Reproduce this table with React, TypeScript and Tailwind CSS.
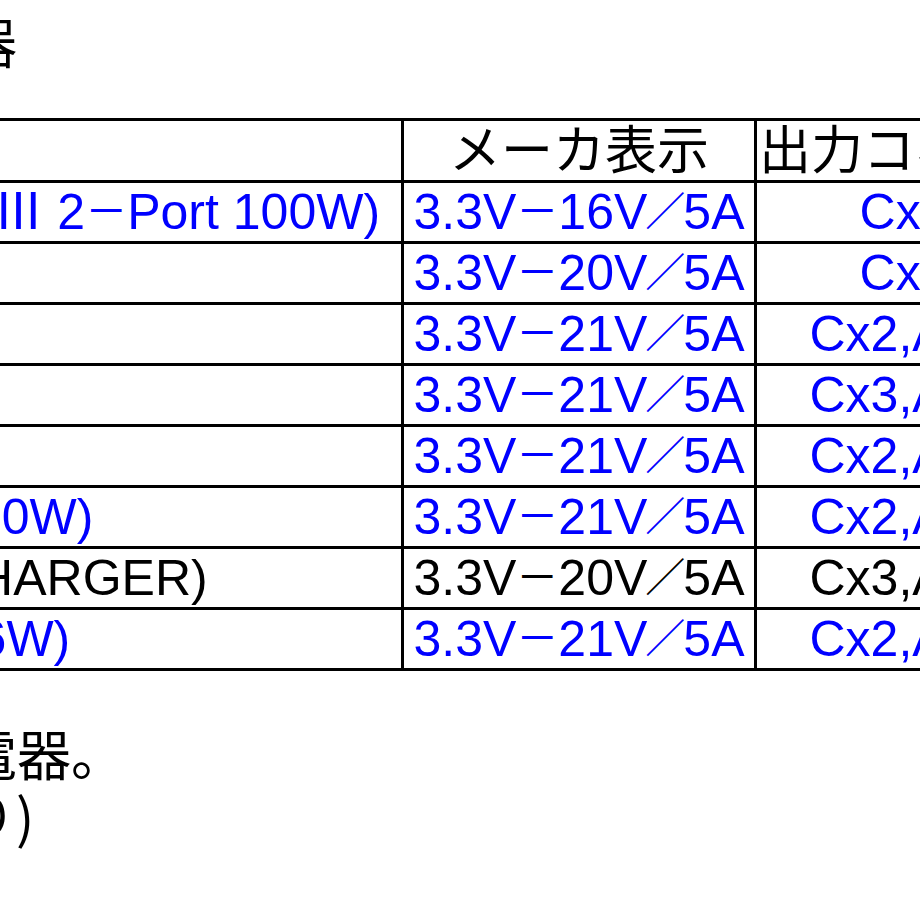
import React from "react";

type Row = {
  name: string;
  volt: string;
  ports: string;
  blue: boolean;
};

const rows: Row[] = [
  { name: "(Anker PowerPort Ⅲ 2−Port 100W)", volt: "16", ports: "Cx2", blue: true },
  { name: "(Anker 65W)", volt: "20", ports: "Cx2", blue: true },
  { name: "(CIO 65W)", volt: "21", ports: "Cx2,Ax1", blue: true },
  { name: "(Anker 45W)", volt: "21", ports: "Cx3,Ax1", blue: true },
  { name: "(Apple 61W)", volt: "21", ports: "Cx2,Ax1", blue: true },
  { name: "(UGREEN GaN 100W)", volt: "21", ports: "Cx2,Ax1", blue: true },
  { name: "(Anker USB−C CHARGER)", volt: "20", ports: "Cx3,Ax1", blue: false },
  { name: "(RAVPower MQ 36W)", volt: "21", ports: "Cx2,Ax1", blue: true },
];

// the wide minus / slash of the original font
function Minus() {
  return <span className="text-[42px]">－</span>;
}

function Slash() {
  return <span className="-mx-[2px] text-[40px]">／</span>;
}

function withMinus(text: string) {
  const parts = text.split("−");
  return parts.map((p, i) => (
    <React.Fragment key={i}>
      {i > 0 && <Minus />}
      {p}
    </React.Fragment>
  ));
}

const cell = "flex items-center whitespace-nowrap border-r-[3px] border-black";

export default function App() {
  return (
    <div className="h-[920px] w-[920px] overflow-hidden bg-white text-black font-['Liberation_Sans','Noto_Sans_CJK_JP',sans-serif]">
      <div className="-ml-[419px] w-[1473px] pt-[10px]">
        {/* title */}
        <h1 className="pl-[4px] text-[54px] leading-[62px] font-normal font-['Noto_Sans_CJK_JP',sans-serif]">
          ■使用した充電器
        </h1>

        {/* table */}
        <div className="mt-[46px] border-t-[3px] border-black">
          <div className="grid h-[62px] grid-cols-[823px_353px_297px] border-b-[3px] border-black text-[52px] leading-none">
            <div className={`${cell} pl-[4px]`}>製品名</div>
            <div className={`${cell} justify-center`}>メーカ表示</div>
            <div className={`${cell} pl-[2px]`}>出力コネクタ</div>
          </div>
          {rows.map((r, i) => (
            <div
              key={i}
              className={`grid h-[61px] grid-cols-[823px_353px_297px] border-b-[3px] border-black text-[50px] leading-none ${
                r.blue ? "text-[#0000ff]" : "text-black"
              }`}
            >
              <div className={`${cell} pl-[4px]`}>{withMinus(r.name)}</div>
              <div className={`${cell} justify-center`}>
                3.3V<Minus />
                {r.volt}V<Slash />5A
              </div>
              <div className={`${cell} justify-center`}>{r.ports}</div>
            </div>
          ))}
        </div>

        {/* notes */}
        <div className="mt-[51px] pl-[4px] text-[54px] leading-[62px] font-['Noto_Sans_CJK_JP',sans-serif]">
          <p>※全て市販の充電器。</p>
          <p>（メーカ資料より)</p>
        </div>
      </div>
    </div>
  );
}
